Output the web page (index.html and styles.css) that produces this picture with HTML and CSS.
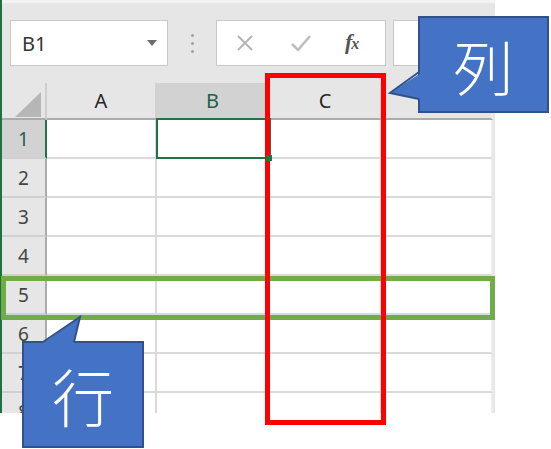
FILE: index.html
```html
<!DOCTYPE html>
<html lang="ja">
	<head>
		<title>行と列</title>
		<meta charset="utf-8">
		<link rel="stylesheet" href="styles.css">
	</head>

	<body>
		<div id="page">
			<div id="excel">
				<div id="toolbar">
					<div id="nameBox"><span>B1</span><span class="caret"></span></div>
					<div id="grip"><i></i><i></i><i></i></div>
					<div id="formulaButtons">
						<svg class="btnCancel" width="18" height="16" viewBox="0 0 18 16"><path d="M2 1 L16 15 M16 1 L2 15" stroke="#b4b4b4" stroke-width="2" fill="none"/></svg>
						<svg class="btnEnter" width="20" height="16" viewBox="0 0 20 16"><path d="M1 9 L7 15 L19 1" stroke="#bdbdbd" stroke-width="2.6" fill="none"/></svg>
						<span class="fx">f<small>x</small></span>
					</div>
					<div id="formulaInput"></div>
				</div>

				<div id="sheet">
					<div class="corner"><svg width="26" height="25" viewBox="0 0 26 25"><polygon points="26,0 26,25 0,25" fill="#b6b6b6"/></svg></div>
					<div class="colHead">A</div>
					<div class="colHead selected">B</div>
					<div class="colHead">C</div>
					<div class="colHead last"></div>

					<div class="rowHead selected">1</div><div class="cell"></div><div class="cell active"></div><div class="cell"></div><div class="cell last"></div>
					<div class="rowHead">2</div><div class="cell"></div><div class="cell"></div><div class="cell"></div><div class="cell last"></div>
					<div class="rowHead">3</div><div class="cell"></div><div class="cell"></div><div class="cell"></div><div class="cell last"></div>
					<div class="rowHead">4</div><div class="cell"></div><div class="cell"></div><div class="cell"></div><div class="cell last"></div>
					<div class="rowHead">5</div><div class="cell"></div><div class="cell"></div><div class="cell"></div><div class="cell last"></div>
					<div class="rowHead">6</div><div class="cell"></div><div class="cell"></div><div class="cell"></div><div class="cell last"></div>
					<div class="rowHead">7</div><div class="cell"></div><div class="cell"></div><div class="cell"></div><div class="cell last"></div>
					<div class="rowHead">8</div><div class="cell"></div><div class="cell"></div><div class="cell"></div><div class="cell last"></div>
				</div>
			</div>

			<!-- annotations drawn over the sheet -->
			<div id="rowMark"></div>
			<div id="colMark"></div>

			<div class="callout" id="colCallout">列</div>
			<div class="callout" id="rowCallout">行</div>
			<svg id="tails" width="551" height="449" viewBox="0 0 551 449">
				<polygon points="421,73 390,93 421,99" fill="#4472c4"/>
				<polyline points="419,72 390,93 419,99" fill="none" stroke="#2f528f" stroke-width="2"/>
				<polygon points="43,343 80,317 74,343" fill="#4472c4"/>
				<polyline points="43,342 80,317 74,342" fill="none" stroke="#2f528f" stroke-width="2"/>
			</svg>
		</div>
	</body>
</html>
```

FILE: styles.css
```css
body {
	margin: 0px;
	background-color: #ffffff;
	font-family: "Noto Sans", "Liberation Sans", sans-serif;
	overflow: hidden;
}

#page {
	position: relative;
	width: 551px;
	height: 449px;
}

#excel {
	width: 495px;
	height: 413px;
	box-sizing: border-box;
	border-left: 2px solid #1e7145;
	background-color: #e6e6e6;
	overflow: hidden;
}

/* formula bar */

#toolbar {
	height: 83px;
	box-sizing: border-box;
	border-top: 3px solid #f3f3f3;
	padding: 17px 0px 0px 8px;
	display: flex;
	align-items: flex-start;
}

#nameBox {
	width: 158px;
	height: 46px;
	box-sizing: border-box;
	background-color: #ffffff;
	border: 1px solid #c8c8c8;
	display: flex;
	align-items: center;
	justify-content: space-between;
	padding: 0px 10px 0px 11px;
	font-size: 20px;
	color: #333333;
}

.caret {
	width: 0px;
	height: 0px;
	border-left: 5px solid transparent;
	border-right: 5px solid transparent;
	border-top: 6px solid #6e6e6e;
}

#grip {
	width: 48px;
	height: 46px;
	display: flex;
	flex-direction: column;
	align-items: center;
	justify-content: center;
	gap: 5px;
}

#grip i {
	width: 3px;
	height: 3px;
	border-radius: 50%;
	background-color: #a0a0a0;
}

#formulaButtons {
	width: 170px;
	height: 46px;
	box-sizing: border-box;
	background-color: #ffffff;
	border: 1px solid #c8c8c8;
	display: flex;
	align-items: center;
	padding-left: 19px;
}

.btnEnter {
	margin-left: 37px;
}

.fx {
	margin-left: 34px;
	font-family: "Liberation Serif", serif;
	font-style: italic;
	font-weight: bold;
	font-size: 22px;
	line-height: 22px;
	color: #555555;
	letter-spacing: -1px;
}

.fx small {
	font-size: 16px;
}

#formulaInput {
	flex: 1;
	height: 46px;
	margin-left: 7px;
	box-sizing: border-box;
	background-color: #ffffff;
	border: 1px solid #c8c8c8;
	border-right: none;
}

/* grid */

#sheet {
	display: grid;
	grid-template-columns: 45px 110px 113px 112px 111px;
	grid-template-rows: 37px repeat(8, 39px);
}

#sheet > div {
	box-sizing: border-box;
}

.corner {
	border-right: 2px solid #cfcfcf;
	border-bottom: 2px solid #ababab;
	display: flex;
	align-items: flex-end;
	justify-content: flex-end;
	padding: 0px 4px 1px 0px;
}

.colHead {
	border-right: 2px solid #d0d0d0;
	border-bottom: 2px solid #ababab;
	display: flex;
	align-items: center;
	justify-content: center;
	font-size: 20px;
	color: #262626;
}

.colHead.selected {
	background-color: #d2d2d2;
	border-bottom-color: #217346;
	color: #1f5f4c;
}

.rowHead {
	border-right: 2px solid #ababab;
	border-bottom: 2px solid #d0d0d0;
	display: flex;
	align-items: center;
	justify-content: center;
	font-size: 19px;
	color: #444444;
}

.rowHead.selected {
	background-color: #d2d2d2;
	border-right-color: #217346;
	color: #1f5f4c;
}

.cell {
	background-color: #ffffff;
	border-right: 2px solid #dadada;
	border-bottom: 2px solid #dadada;
}

.cell.last, .colHead.last {
	border-right-color: #ececec;
}

.cell.active {
	position: relative;
}

.cell.active::after {
	content: "";
	position: absolute;
	left: -1px;
	top: -2px;
	right: -3px;
	bottom: -2px;
	border: 2px solid #217346;
}

.cell.active::before {
	content: "";
	position: absolute;
	right: -4px;
	bottom: -4px;
	width: 6px;
	height: 6px;
	background-color: #217346;
	z-index: 2;
}

/* annotations */

#rowMark {
	position: absolute;
	left: 1px;
	top: 276px;
	width: 494px;
	height: 44px;
	box-sizing: border-box;
	border: 5px solid #70ad47;
}

#colMark {
	position: absolute;
	left: 265px;
	top: 73px;
	width: 121px;
	height: 352px;
	box-sizing: border-box;
	border: 5px solid #ff0000;
}

.callout {
	position: absolute;
	box-sizing: border-box;
	background-color: #4472c4;
	border: 2px solid #2f528f;
	color: #ffffff;
	font-family: "Noto Sans CJK JP", sans-serif;
	font-weight: 300;
	display: flex;
	align-items: center;
	justify-content: center;
}

#colCallout {
	left: 418px;
	top: 16px;
	width: 131px;
	height: 97px;
	font-size: 60px;
}

#rowCallout {
	left: 22px;
	top: 341px;
	width: 122px;
	height: 107px;
	font-size: 62px;
}

#tails {
	position: absolute;
	left: 0px;
	top: 0px;
	pointer-events: none;
}
```
